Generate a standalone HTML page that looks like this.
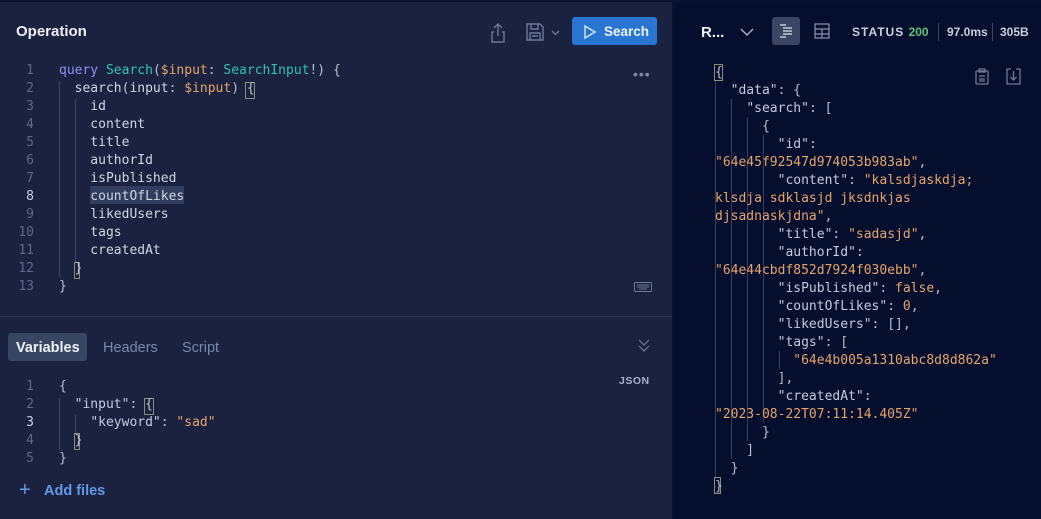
<!DOCTYPE html>
<html><head><meta charset="utf-8"><style>
*{margin:0;padding:0;box-sizing:border-box}
body{width:1041px;height:519px;background:#0b1230;overflow:hidden;position:relative;font-family:"Liberation Sans",sans-serif}
.mono{font-family:"DejaVu Sans Mono","Liberation Mono",monospace;font-size:13px}
#left{position:absolute;left:0;top:2px;width:672px;height:517px;background:#1b2240}
#right{position:absolute;left:674px;top:2px;width:367px;height:517px;background:#060e2e}
.a{position:absolute;white-space:pre}
.ln{color:#5d6888;text-align:right;width:24px}
.k{color:#8d8ff0}.t{color:#2ec4b0}.v{color:#e6a46c}.f{color:#cfd5e3}.p{color:#b8bfd0}.s{color:#e6a46c}.key{color:#c3cbe0}
.g{position:absolute;width:1px;background:#3a4463}
.gr{position:absolute;width:1px;background:#36405e}
</style></head><body>
<div id="left">
<div class="a" style="left:16px;top:21px;font-size:15px;font-weight:bold;color:#eef1f7">Operation</div>
<svg class="a" style="left:488px;top:20px" width="20" height="22" viewBox="0 0 20 22" fill="none" stroke="#6e7897" stroke-width="1.4"><path d="M10 2v12M6 6l4-4 4 4M6 10H4v10h12V10h-2"/></svg>
<svg class="a" style="left:525px;top:20px" width="20" height="20" viewBox="0 0 20 20" fill="none" stroke="#6e7897" stroke-width="1.4"><path d="M2 2h13l3 3v13H2z M6 2v5h7V2 M5 11h10v7H5z M7 14h6"/></svg>
<svg class="a" style="left:551px;top:28px" width="9" height="6" viewBox="0 0 9 6" fill="none" stroke="#6e7897" stroke-width="1.4"><path d="M1 1l3.5 3.5L8 1"/></svg>
<div class="a" style="left:572px;top:15px;width:85px;height:28px;background:#2876d2;border-radius:3px"></div>
<svg class="a" style="left:583px;top:22px" width="14" height="16" viewBox="0 0 14 16" fill="none" stroke="#dbe6f7" stroke-width="1.4"><path d="M2 2v12l10-6z"/></svg>
<div class="a" style="left:604px;top:22px;font-size:13.5px;font-weight:bold;color:#eef3fb">Search</div>
<div class="a" style="left:633px;top:64px;color:#7f89a8;font-size:14px;letter-spacing:1px">•••</div>
<div style="position:absolute;left:90px;top:184px;width:94px;height:18px;background:#323d5e"></div>
<div class="g" style="left:59px;top:79px;height:196px"></div>
<div class="g" style="left:75px;top:97px;height:164px"></div>
<div class="a" style="left:245px;top:80px;width:10px;height:17px;border:1px solid #8a8f7a"></div>
<div class="a" style="left:74px;top:260px;width:6px;height:17px;border:1px solid #8a8f7a"></div>
<div class="a mono" style="left:0;top:60px;line-height:18px">
<div class="a ln" style="left:10px;top:0">1
2
3
4
5
6
7
<span style="color:#c8cfe0">8</span>
9
10
11
12
13</div>
<div class="a" style="left:59px;top:0"><span class="k">query</span> <span class="t">Search</span><span class="p">(</span><span class="v">$input</span><span class="p">: </span><span class="t">SearchInput</span><span class="p">!) {</span>
<span class="f">  search</span><span class="p">(</span><span class="f">input</span><span class="p">: </span><span class="v">$input</span><span class="p">) {</span>
<span class="f">    id
    content
    title
    authorId
    isPublished
    countOfLikes
    likedUsers
    tags
    createdAt</span>
<span class="p">  }
}</span></div>
</div>
<svg class="a" style="left:634px;top:280px" width="18" height="10" viewBox="0 0 18 10" fill="none" stroke="#6e7897" stroke-width="1"><rect x="0.5" y="0.5" width="17" height="9" rx="1"/><path d="M3 3h12M3 5h12M5 7h8"/></svg>
<div style="position:absolute;left:0;top:314px;width:672px;height:1px;background:#2c3553"></div>
<div class="a" style="left:8px;top:331px;width:79px;height:28px;background:#374563;border-radius:3px"></div>
<div class="a" style="left:16px;top:338px;font-size:14.5px;font-weight:bold;color:#eef1f7">Variables</div>
<div class="a" style="left:103px;top:338px;font-size:14.5px;color:#7b87a8">Headers</div>
<div class="a" style="left:182px;top:338px;font-size:14.5px;color:#7b87a8">Script</div>
<svg class="a" style="left:637px;top:336px" width="14" height="16" viewBox="0 0 14 16" fill="none" stroke="#6e7897" stroke-width="1.2"><path d="M2 2l5 5 5-5M2 8l5 5 5-5"/></svg>
<div class="a" style="left:619px;top:373px;font-size:10.5px;font-weight:bold;color:#a9b2c8;letter-spacing:0.5px">JSON</div>
<div class="g" style="left:59px;top:396px;height:52px"></div>
<div class="g" style="left:75px;top:413px;height:20px"></div>
<div class="a" style="left:144px;top:396px;width:10px;height:17px;border:1px solid #8a8f7a"></div>
<div class="a" style="left:74px;top:431px;width:6px;height:17px;border:1px solid #8a8f7a"></div>
<div class="a mono" style="left:0;top:376px;line-height:18px">
<div class="a ln" style="left:10px;top:0">1
2
<span style="color:#c8cfe0">3</span>
4
5</div>
<div class="a p" style="left:59px;top:0">{
  <span class="key">"input"</span>: {
    <span class="key">"keyword"</span>: <span class="s">"sad"</span>
  }
}</div>
</div>
<div class="a" style="left:19px;top:478px;font-size:20px;color:#5f9ae6;line-height:20px">+</div>
<div class="a" style="left:44px;top:481px;font-size:14.5px;font-weight:bold;color:#5f9ae6">Add files</div>
</div>
<div id="right">
<div class="a" style="left:27px;top:22px;font-size:15px;font-weight:bold;color:#eef1f7">R...</div>
<svg class="a" style="left:66px;top:26px" width="14" height="9" viewBox="0 0 14 9" fill="none" stroke="#aab3c8" stroke-width="1.4"><path d="M1 1l6 6 6-6"/></svg>
<div class="a" style="left:98px;top:15px;width:28px;height:28px;background:#3a4463;border-radius:3px"></div>
<svg class="a" style="left:104px;top:21px" width="16" height="16" viewBox="0 0 16 16" fill="none" stroke="#dce2ee" stroke-width="1.2"><path d="M2 2h6M5 5h9M5 8h9M5 11h9M2 14h6"/></svg>
<svg class="a" style="left:140px;top:21px" width="16" height="16" viewBox="0 0 16 16" fill="none" stroke="#8a94b0" stroke-width="1.2"><rect x="1" y="1" width="14" height="14"/><path d="M1 6h14M1 11h14M8 6v9"/></svg>
<div class="a" style="left:178px;top:23px;font-size:12px;font-weight:bold;color:#c8d0e0;letter-spacing:1px">STATUS <span style="color:#5ec27a;letter-spacing:0">200</span></div>
<div class="a" style="left:264px;top:21px;width:1px;height:18px;background:#3a4463"></div>
<div class="a" style="left:273px;top:23px;font-size:12px;font-weight:bold;color:#c8d0e0">97.0ms</div>
<div class="a" style="left:318px;top:21px;width:1px;height:18px;background:#3a4463"></div>
<div class="a" style="left:326px;top:23px;font-size:12px;font-weight:bold;color:#c8d0e0">305B</div>
<svg class="a" style="left:301px;top:66px" width="14" height="17" viewBox="0 0 14 17" fill="none" stroke="#6e7897" stroke-width="1.3"><rect x="1" y="3" width="12" height="13" rx="1"/><rect x="4" y="1" width="6" height="3"/><path d="M4 8h6M4 11h6M4 13h6"/></svg>
<svg class="a" style="left:332px;top:66px" width="15" height="17" viewBox="0 0 15 17" fill="none" stroke="#6e7897" stroke-width="1.3"><path d="M5 1H1v15h13V1h-4M7.5 3v9M4.5 9l3 3 3-3"/></svg>
<div class="gr" style="left:41px;top:79px;height:396px"></div>
<div class="gr" style="left:57px;top:97px;height:360px"></div>
<div class="gr" style="left:73px;top:115px;height:324px"></div>
<div class="gr" style="left:89px;top:133px;height:288px"></div>
<div class="gr" style="left:105px;top:349px;height:18px"></div>
<div class="a" style="left:40px;top:62px;width:9px;height:17px;border:1px solid #8a8f7a"></div>
<div class="a" style="left:40px;top:475px;width:7px;height:17px;border:1px solid #8a8f7a"></div>
<div class="a mono p" style="left:41px;top:62px;line-height:18px">{
  <span class="key">"data"</span>: {
    <span class="key">"search"</span>: [
      {
        <span class="key">"id"</span>:
<span class="s">"64e45f92547d974053b983ab"</span>,
        <span class="key">"content"</span>: <span class="s">"kalsdjaskdja;</span>
<span class="s">klsdja sdklasjd jksdnkjas</span>
<span class="s">djsadnaskjdna"</span>,
        <span class="key">"title"</span>: <span class="s">"sadasjd"</span>,
        <span class="key">"authorId"</span>:
<span class="s">"64e44cbdf852d7924f030ebb"</span>,
        <span class="key">"isPublished"</span>: <span class="s">false</span>,
        <span class="key">"countOfLikes"</span>: <span class="s">0</span>,
        <span class="key">"likedUsers"</span>: [],
        <span class="key">"tags"</span>: [
          <span class="s">"64e4b005a1310abc8d8d862a"</span>
        ],
        <span class="key">"createdAt"</span>:
<span class="s">"2023-08-22T07:11:14.405Z"</span>
      }
    ]
  }
}</div>
</div>
</body></html>
